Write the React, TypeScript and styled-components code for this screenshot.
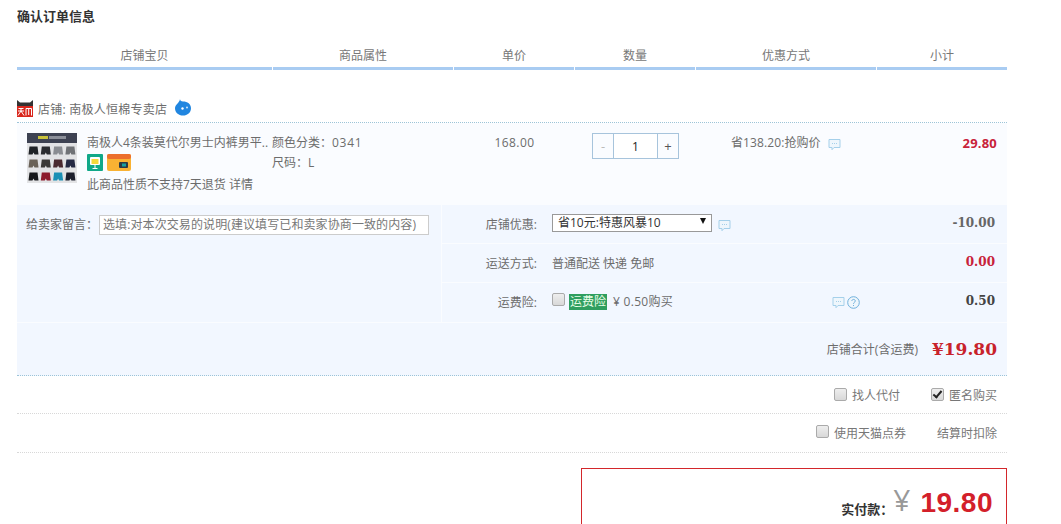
import React from "react";
import styled, { createGlobalStyle } from "styled-components";

const GlobalStyle = createGlobalStyle`
  html, body { margin: 0; padding: 0; background: #fff; }
  body {
    font-family: "Open Sans", "Noto Sans CJK SC", sans-serif;
    font-size: 12px;
    color: #6c6c6c;
    overflow: hidden;
  }
`;

const Page = styled.div`
  width: 990px;
  height: 524px;
  margin-left: 17px;
  overflow: hidden;
`;

const Title = styled.h2`
  margin: 0;
  padding-top: 7px;
  height: 38px;
  box-sizing: border-box;
  font-size: 13px;
  line-height: 19px;
  font-weight: 700;
  color: #333;
`;

const Head = styled.div`
  display: grid;
  grid-template-columns: 256px 181px 121px 121px 181px 130px;
  height: 32px;
`;

const HeadCell = styled.div`
  margin-right: 1px;
  padding-top: 7px;
  text-align: center;
  line-height: 21px;
  color: #777;
  border-bottom: 3px solid #a9ccf2;
  box-sizing: border-box;
  &:last-child { margin-right: 0; }
`;

const ShopRow = styled.div`
  display: flex;
  align-items: center;
  height: 53px;
  padding-top: 25px;
  box-sizing: border-box;
  border-bottom: 1px dotted #9cc4d8;
`;

const ShopName = styled.span`
  margin-left: 5px;
  margin-right: 8px;
  letter-spacing: 0.25px;
`;

const ItemRow = styled.div`
  display: grid;
  grid-template-columns: 255px 182px 121px 121px 181px 130px;
  height: 82px;
  background: #fafcff;
`;

const ProductCell = styled.div`
  display: flex;
  padding: 10px 0 0 10px;
`;

const ProductText = styled.div`
  margin-left: 10px;
  width: 185px;
  line-height: 20px;
`;

const ProductName = styled.div`
  white-space: nowrap;
  overflow: hidden;
`;

const Badges = styled.div`
  display: flex;
  gap: 4px;
  height: 17px;
  margin-top: 1px;
`;

const Notice = styled.div`
  margin-top: 4px;
`;

const AttrCell = styled.div`
  padding-top: 10px;
  line-height: 20px;
`;

const Digits = styled.span`
  letter-spacing: 0.7px;
`;

const PriceCell = styled.div`
  padding-top: 10px;
  line-height: 20px;
  text-align: center;
  letter-spacing: 0.4px;
`;

const StepperCell = styled.div`
  padding: 10px 0 0 17px;
`;

const Stepper = styled.div`
  display: flex;
  width: 87px;
  height: 26px;
  box-sizing: border-box;
  border: 1px solid #a7c4dc;
  background: #fff;
`;

const StepBtn = styled.div<{ $off?: boolean }>`
  width: 20px;
  text-align: center;
  line-height: 25px;
  font-size: 13px;
  background: #fafcff;
  color: ${({ $off }) => ($off ? "#bbb" : "#555")};
`;

const StepValue = styled.div`
  flex: 1;
  text-align: center;
  line-height: 25px;
  color: #222;
  border-left: 1px solid #a7c4dc;
  border-right: 1px solid #a7c4dc;
  background: #fff;
`;

const PromoCell = styled.div`
  display: flex;
  align-items: flex-start;
  gap: 7px;
  padding: 10px 0 0 35px;
  line-height: 20px;
  letter-spacing: 0.1px;
`;

const SubtotalCell = styled.div`
  padding: 10px 10px 0 0;
  line-height: 20px;
  text-align: right;
`;

const Money = styled.span<{ $color?: string }>`
  font-family: "DejaVu Serif", serif;
  font-weight: 700;
  font-size: 12px;
  color: ${({ $color }) => $color || "#666"};
`;

const RedBold = styled.span`
  font-family: "Open Sans", sans-serif;
  font-weight: 700;
  font-size: 13px;
  letter-spacing: 0.2px;
  color: #c8223a;
`;

const Extras = styled.div`
  display: grid;
  grid-template-columns: 425px 565px;
  height: 117px;
  background: #f2f7ff;
`;

const MessageCell = styled.div`
  display: flex;
  align-items: flex-start;
  padding: 10px 0 0 9px;
  line-height: 20px;
  border-right: 1px solid #fafcff;
`;

const MessageInput = styled.input`
  width: 330px;
  height: 20px;
  box-sizing: border-box;
  margin: 0 0 0 1px;
  padding: 0 3px;
  border: 1px solid #ccc;
  background: #fff;
  font: inherit;
  letter-spacing: 0.1px;
  &::placeholder { color: #777; opacity: 1; }
`;

const OptionList = styled.div`
  display: flex;
  flex-direction: column;
`;

const OptionRow = styled.div`
  display: grid;
  grid-template-columns: 95px 1fr auto;
  column-gap: 15px;
  height: 39px;
  padding: 8px 12px 0 0;
  box-sizing: border-box;
  line-height: 20px;
  border-bottom: 1px solid #fafcff;
  &:last-child { border-bottom: none; }
`;

const OptionLabel = styled.div`
  margin-top: 2px;
  text-align: right;
`;

const OptionBody = styled.div<{ $top?: number }>`
  display: flex;
  align-items: center;
  height: 21px;
  position: relative;
  margin-top: ${({ $top }) => $top || 0}px;
`;

const FakeSelect = styled.div`
  display: flex;
  align-items: center;
  justify-content: space-between;
  width: 160px;
  height: 18px;
  margin-right: 6px;
  box-sizing: border-box;
  padding: 0 5px;
  border: 1px solid #999;
  background: #fff;
  color: #333;
`;

const Arrow = styled.i`
  display: block;
  width: 0;
  height: 0;
  border-left: 3px solid transparent;
  border-right: 3px solid transparent;
  border-top: 6px solid #111;
  margin-bottom: 3px;
`;

const GreenTag = styled.span`
  margin-left: 4px;
  padding: 0 1px;
  height: 16px;
  line-height: 16px;
  background: #2f9e5f;
  color: #e8ffe8;
`;

const Insurance = styled.span`
  margin-left: 6px;
  letter-spacing: 0.3px;
`;

const HelpIcons = styled.div`
  position: absolute;
  left: 280px;
  top: 5px;
  display: flex;
  gap: 2px;
`;

const TotalRow = styled.div`
  display: flex;
  align-items: center;
  justify-content: flex-end;
  height: 54px;
  padding-right: 10px;
  box-sizing: border-box;
  border-top: 1px solid #fafcff;
  border-bottom: 1px dotted #9cc4d8;
  background: #f2f7ff;
`;

const TotalPrice = styled.span`
  margin-left: 14px;
  font-family: "DejaVu Serif", serif;
  font-weight: 700;
  font-size: 17px;
  color: #c8222b;
`;

const CheckRow = styled.div<{ $h: number }>`
  display: flex;
  align-items: center;
  justify-content: flex-end;
  height: ${({ $h }) => $h}px;
  padding-right: 10px;
  box-sizing: border-box;
  border-bottom: 1px dotted #d8d8d8;
`;

const Check = styled.input<{ $up?: number }>`
  appearance: none;
  width: 13px;
  height: 13px;
  margin: ${({ $up }) => -($up || 0)}px 5px 0 0;
  position: relative;
  border: 1px solid #aaa;
  border-radius: 2px;
  background: linear-gradient(#eee, #d8d8d8);
  &:checked::after {
    content: "";
    position: absolute;
    left: 3px;
    top: 0;
    width: 3px;
    height: 7px;
    border: solid #222;
    border-width: 0 2px 2px 0;
    transform: rotate(40deg);
  }
`;

const CheckLabel = styled.span<{ $gap?: number }>`
  margin-right: ${({ $gap }) => $gap || 0}px;
  color: #777;
`;

const PayBox = styled.div`
  display: flex;
  align-items: flex-start;
  justify-content: flex-end;
  width: 426px;
  height: 80px;
  margin: 15px 0 0 auto;
  padding: 20px 13px 0 0;
  box-sizing: border-box;
  border: 1px solid #d3272b;
`;

const PayLabel = styled.span`
  margin-top: 10px;
  font-size: 13px;
  font-weight: 700;
  color: #333;
`;

const PayYen = styled.span`
  margin: -3px 10px 0 0;
  font-size: 30px;
  line-height: 28px;
  color: #999;
`;

const PayValue = styled.span`
  font-family: "Liberation Sans", sans-serif;
  font-weight: 700;
  font-size: 28px;
  line-height: 28px;
  letter-spacing: 0.5px;
  color: #d3202a;
`;

const Bubble = ({ top = 5 }: { top?: number }) => (
  <svg width="13" height="13" viewBox="0 0 13 13" style={{ flex: "none", marginTop: top }}>
    <path d="M1 1.500h11v8H6l-2 2.200V9.500H1z" fill="#eef6fc" stroke="#a5d0ea" />
    <path d="M4 5.500h1M6 5.500h1M8 5.500h1" stroke="#a5d0ea" />
  </svg>
);

const Tmall = () => (
  <svg width="16" height="17" viewBox="0 0 16 17">
    <path d="M0 0l3 2.500h10L16 0v7H0z" fill="#333" />
    <rect y="6" width="16" height="11" fill="#d9261c" />
    <path d="M1.500 8.500h5M1 11h6M4 8.500V11l-3 4.500M4 11l3 4.500M9 8.500h5.500v7M9 8.500v7M11.700 8.500v6.500" stroke="#fff" fill="none" />
  </svg>
);

const WangWang = () => (
  <svg width="16" height="17" viewBox="0 0 16 17" style={{ marginTop: -2 }}>
    <path d="M5 0c0 1.500 1 2.500 3 2.500 4.500 0 8 2.500 8 6.700S12.500 16.500 8 16.500 0 13.500 0 9.200C0 5.500 4.500 4 5 0z" fill="#2186e0" />
    <circle cx="7.500" cy="9.500" r="1.200" fill="#fff" />
    <circle cx="12" cy="8.500" r="1" fill="#cfe6fb" />
  </svg>
);

const swatches = [
  ["#1e2226", "#2a2c30", "#8a8d92", "#6f7276"],
  ["#6a6258", "#3b3a38", "#4a2a30", "#252a44"],
  ["#15171a", "#8c1a2c", "#1b8fb4", "#1b1e2c"],
];

const ProductThumb = () => (
  <svg width="50" height="50" viewBox="0 0 50 50" style={{ flex: "none" }}>
    <rect width="50" height="50" fill="#e2e3e5" />
    <rect width="50" height="10" fill="#3d4252" />
    <rect x="11" y="3" width="10" height="3" fill="#c8c23c" />
    <rect x="22" y="3" width="17" height="3" fill="#8b8f99" />
    {swatches.map((row, r) =>
      row.map((c, i) => {
        const x = 1.500 + i * 12.300;
        const y = 13.500 + r * 13;
        return (
          <path
            key={`${r}-${i}`}
            d={`M${x + 1} ${y}h8l1 8h-4l-1-2-1 2h-4z`}
            fill={c}
          />
        );
      })
    )}
  </svg>
);

const GreenBadge = () => (
  <svg width="16" height="17" viewBox="0 0 16 17">
    <rect width="16" height="17" rx="1" fill="#10a888" />
    <rect x="3" y="3" width="10" height="8" rx="1" fill="#fff" />
    <rect x="4.500" y="5" width="7" height="5" fill="#f4d93a" />
    <path d="M8 11v3M5.500 14.500h5" stroke="#fff" fill="none" />
  </svg>
);

const CardBadge = () => (
  <svg width="24" height="17" viewBox="0 0 24 17">
    <rect width="24" height="17" rx="2" fill="#f9b233" />
    <rect width="24" height="5" rx="2" fill="#ec6f2d" />
    <rect x="12" y="8" width="9" height="6" rx="1" fill="#2b3a46" />
    <rect x="15" y="9.500" width="4" height="3" fill="#16a0a0" />
  </svg>
);

const HelpCircle = () => (
  <svg width="13" height="13" viewBox="0 0 13 13">
    <circle cx="6.500" cy="6.500" r="5.800" fill="#eef6fc" stroke="#6fb0dc" />
    <path d="M4.800 5c.2-2.200 3.500-2 3.500 0 0 1.300-1.800 1.300-1.800 2.800M6.500 9v1" stroke="#6fb0dc" fill="none" />
  </svg>
);

export default function App() {
  return (
    <Page>
      <GlobalStyle />
      <Title>确认订单信息</Title>
      <Head>
        {["店铺宝贝", "商品属性", "单价", "数量", "优惠方式", "小计"].map((h) => (
          <HeadCell key={h}>{h}</HeadCell>
        ))}
      </Head>
      <ShopRow>
        <Tmall />
        <ShopName>店铺: 南极人恒棉专卖店</ShopName>
        <WangWang />
      </ShopRow>
      <ItemRow>
        <ProductCell>
          <ProductThumb />
          <ProductText>
            <ProductName>南极人4条装莫代尔男士内裤男平..</ProductName>
            <Badges>
              <GreenBadge />
              <CardBadge />
            </Badges>
            <Notice>此商品性质不支持7天退货 详情</Notice>
          </ProductText>
        </ProductCell>
        <AttrCell>
          <div>颜色分类：<Digits>0341</Digits></div>
          <div>尺码：L</div>
        </AttrCell>
        <PriceCell>168.00</PriceCell>
        <StepperCell>
          <Stepper>
            <StepBtn $off>-</StepBtn>
            <StepValue>1</StepValue>
            <StepBtn>+</StepBtn>
          </Stepper>
        </StepperCell>
        <PromoCell>
          省138.20:抢购价
          <Bubble />
        </PromoCell>
        <SubtotalCell>
          <RedBold>29.80</RedBold>
        </SubtotalCell>
      </ItemRow>
      <Extras>
        <MessageCell>
          给卖家留言：
          <MessageInput placeholder="选填:对本次交易的说明(建议填写已和卖家协商一致的内容)" />
        </MessageCell>
        <OptionList>
          <OptionRow>
            <OptionLabel>店铺优惠:</OptionLabel>
            <OptionBody $top={-1}>
              <FakeSelect>
                省10元:特惠风暴10
                <Arrow />
              </FakeSelect>
              <Bubble />
            </OptionBody>
            <Money>-10.00</Money>
          </OptionRow>
          <OptionRow>
            <OptionLabel>运送方式:</OptionLabel>
            <OptionBody $top={1}>普通配送 快递 免邮</OptionBody>
            <Money $color="#c8223a">0.00</Money>
          </OptionRow>
          <OptionRow>
            <OptionLabel>运费险:</OptionLabel>
            <OptionBody>
              <Check type="checkbox" readOnly $up={5} style={{ marginRight: 0 }} />
              <GreenTag>运费险</GreenTag>
              <Insurance>¥ 0.50购买</Insurance>
              <HelpIcons>
                <Bubble top={0} />
                <HelpCircle />
              </HelpIcons>
            </OptionBody>
            <Money $color="#444">0.50</Money>
          </OptionRow>
        </OptionList>
      </Extras>
      <TotalRow>
        店铺合计(含运费)
        <TotalPrice>¥19.80</TotalPrice>
      </TotalRow>
      <CheckRow $h={38}>
        <Check type="checkbox" readOnly />
        <CheckLabel $gap={31}>找人代付</CheckLabel>
        <Check type="checkbox" readOnly checked />
        <CheckLabel>匿名购买</CheckLabel>
      </CheckRow>
      <CheckRow $h={39}>
        <Check type="checkbox" readOnly $up={3} />
        <CheckLabel $gap={31}>使用天猫点券</CheckLabel>
        <CheckLabel>结算时扣除</CheckLabel>
      </CheckRow>
      <PayBox>
        <PayLabel>实付款：</PayLabel>
        <PayYen>¥</PayYen>
        <PayValue>19.80</PayValue>
      </PayBox>
    </Page>
  );
}
